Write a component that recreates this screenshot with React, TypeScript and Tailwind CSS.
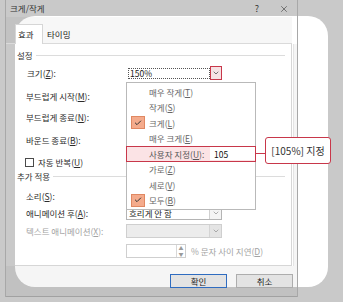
import { Check, ChevronDown, X } from "lucide-react";

const red = "border-[#c8374a]";

function Label({ text, k, after = ":" , dim = false }: { text: string; k: string; after?: string; dim?: boolean }) {
  return (
    <span className={dim ? "text-[#a3a3a3]" : "text-[#2b2b2b]"}>
      {text}(<u>{k}</u>){after}
    </span>
  );
}

function GroupTitle({ title }: { title: string }) {
  return (
    <div className="flex items-center h-[12px] pl-[2px] pr-[6px]">
      <span className="text-[#333]">{title}</span>
      <div className="flex-1 h-px bg-[#dcdcdc] ml-[3px]" />
    </div>
  );
}

function ComboArrow({ dim = false }: { dim?: boolean }) {
  return (
    <div className={`w-[12px] h-full flex items-center justify-center border-l ${dim ? "border-[#d4d4d4] bg-[#e4e4e4]" : "border-[#d0d0d0] bg-[#f4f4f4]"}`}>
      <ChevronDown size={8} strokeWidth={2} className="text-[#8a8a8a]" />
    </div>
  );
}

const items: { text: string; k: string; checked?: boolean }[] = [
  { text: "매우 작게", k: "T" },
  { text: "작게", k: "S" },
  { text: "크게", k: "L", checked: true },
  { text: "매우 크게", k: "E" },
  { text: "사용자 지정", k: "U" },
  { text: "가로", k: "Z" },
  { text: "세로", k: "V" },
  { text: "모두", k: "B", checked: true },
];

export default function App() {
  return (
    <div className="relative w-[343px] h-[302px] bg-[#c9c9c9] overflow-hidden text-[8.5px] leading-none font-['Noto_Sans_CJK_KR','Noto_Sans',sans-serif]">
      {/* white rounded highlight behind the dialog */}
      <div className="absolute left-[15px] top-[16px] w-[313px] h-[271px] rounded-[20px] bg-white" />

      <div className="relative ml-[5px] w-[293px] h-[297px] border-x border-b border-[#a8a8a8] flex flex-col">
        {/* title bar */}
        <div className="h-[17px] shrink-0 flex items-center pl-[4px] pr-[8px] text-[#333]">
          <span className="text-[8.5px]">크게/작게</span>
          <span className="ml-auto mr-[20px] text-[9px]">?</span>
          <X size={10} strokeWidth={1.4} className="text-[#333]" />
        </div>

        {/* tabs */}
        <div className="h-[27px] shrink-0 flex items-end pl-[9px] bg-black/[0.03] border-b border-[#dadada] mr-[5px]">
          <div className="h-[20px] w-[28px] -mb-px bg-white border-x border-t border-[#d6d6d6] flex items-center pl-[2px] text-[#222]">
            효과
          </div>
          <div className="h-[18px] flex items-center pl-[4px] text-[#222]">타이밍</div>
        </div>

        <div className="flex flex-1">
          {/* panel */}
          <div className="ml-[9px] w-[277px] h-[222px] border-r border-b border-[#d6d6d6] flex flex-col pt-[5px]">
            <GroupTitle title="설정" />

            <div className="mt-[5px] h-[14px] flex items-center pl-[11px]">
              <div className="w-[100px] shrink-0 pl-px"><Label text="크기" k="Z" /></div>
              <div className="ml-[2px] w-[82px] h-[11px] border border-dotted border-[#555] flex items-center pl-[1px] text-[#222]">
                150%
              </div>
              <div className={`w-[12px] h-[14px] border ${red} bg-[#f6e2e4] flex items-center justify-center`}>
                <ChevronDown size={8} strokeWidth={2.2} className="text-[#444]" />
              </div>
            </div>

            <div className="mt-[9px] h-[14px] flex items-center pl-[11px]"><Label text="부드럽게 시작" k="M" /></div>
            <div className="mt-[7px] h-[14px] flex items-center pl-[11px]"><Label text="부드럽게 종료" k="N" /></div>
            <div className="mt-[9px] h-[14px] flex items-center pl-[11px]"><Label text="바운드 종료" k="B" /></div>

            <div className="mt-[8px] h-[14px] flex items-center pl-[10px]">
              <div className="w-[9px] h-[9px] border border-[#4a4a4a] bg-white" />
              <span className="ml-[4px]"><Label text="자동 반복" k="U" after="" /></span>
            </div>

            <div className="mt-[1px]"><GroupTitle title="추가 적용" /></div>

            <div className="mt-[7px] h-[14px] flex items-center pl-[11px]"><Label text="소리" k="S" /></div>

            <div className="mt-[3px] h-[14px] flex items-center pl-[11px]">
              <div className="w-[100px] shrink-0"><Label text="애니메이션 후" k="A" /></div>
              <div className="w-[96px] h-[14px] border border-[#b4b4b4] bg-white flex items-center">
                <span className="flex-1 pl-[2px] text-[#222]">흐리게 안 함</span>
                <ComboArrow />
              </div>
            </div>

            <div className="mt-[4px] h-[14px] flex items-center pl-[11px]">
              <div className="w-[100px] shrink-0"><Label text="텍스트 애니메이션" k="X" dim /></div>
              <div className="w-[96px] h-[14px] border border-[#cfcfcf] bg-[#ececec] flex items-center">
                <span className="flex-1" />
                <ComboArrow dim />
              </div>
            </div>

            <div className="mt-[6px] h-[14px] flex items-center pl-[111px]">
              <div className="w-[60px] h-[14px] border border-[#cfcfcf] bg-white flex">
                <span className="flex-1" />
                <div className="w-[9px] border-l border-[#d8d8d8] flex flex-col items-center justify-center text-[#9a9a9a] text-[5px] leading-[6px]">
                  <span>▲</span>
                  <span>▼</span>
                </div>
              </div>
              <span className="ml-[5px] text-[#a3a3a3]">% 문자 사이 지연(<u>D</u>)</span>
            </div>
          </div>
          <div className="flex-1 bg-black/[0.04] border-l border-[#e4e4e4] ml-px h-[222px]" />
        </div>

        {/* bottom buttons */}
        <div className="h-[31px] shrink-0 bg-black/[0.04] flex items-start justify-end pt-[8px] pr-[4px] gap-[9px]">
          <div className="w-[57px] h-[14px] border border-[#2f6cc0] bg-[#e3e3e3] flex items-center justify-center text-[#222]">확인</div>
          <div className="w-[57px] h-[14px] border border-[#adadad] bg-[#e3e3e3] flex items-center justify-center text-[#222]">취소</div>
        </div>
      </div>

      {/* open dropdown list */}
      <div className="absolute left-[126px] top-[82px] w-[130px] bg-white border border-[#b9b9b9] flex flex-col py-px">
        {items.map((it) =>
          it.k === "U" ? (
            <div key={it.k} className={`h-[15.5px] flex items-center border ${red} bg-[#fbe3e5] -mx-px relative`}>
              <span className="pl-[22px] text-[#555]">
                {it.text}(<u>{it.k}</u>):
              </span>
              <div className="ml-auto w-[45px] h-[13px] bg-white flex items-center pl-[4px] text-[#111]">105</div>
              <div className={`absolute -right-[11px] top-[6px] w-[10px] h-px bg-[#c8374a]`} />
            </div>
          ) : (
            <div key={it.k} className="h-[15.5px] flex items-center">
              <div className="w-[22px] flex items-center justify-center">
                {it.checked && (
                  <div className="w-[14px] h-[13px] bg-[#f4ab8c] border border-[#e08862] flex items-center justify-center">
                    <Check size={8} strokeWidth={3} className="text-[#333]" />
                  </div>
                )}
              </div>
              <span className="text-[#666]">
                {it.text}(<u>{it.k}</u>)
              </span>
            </div>
          )
        )}
      </div>

      {/* callout */}
      <div className={`absolute left-[265px] top-[137px] w-[66px] h-[27px] rounded-[3px] border ${red} bg-white flex items-center justify-center text-[10px] text-[#333]`}>
        [105%] 지정
      </div>
    </div>
  );
}
